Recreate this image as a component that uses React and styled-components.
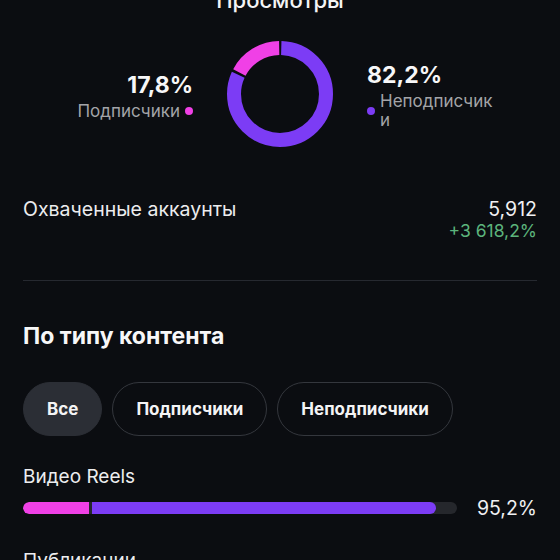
import React from "react";
import styled, { createGlobalStyle } from "styled-components";

const Global = createGlobalStyle`
  html, body { margin: 0; padding: 0; background: #0b0d11; }
  body { font-family: Inter, "Noto Sans", sans-serif; color: #f2f2f3; overflow: hidden; }
  * { box-sizing: border-box; }
`;

const Page = styled.div`
  width: 560px;
  height: 560px;
  overflow: hidden;
  background: #0b0d11;
  padding: 0 23px;
`;

const Title = styled.div`
  margin-top: -14px;
  height: 28px;
  font-size: 22px;
  line-height: 28px;
  font-weight: 500;
  text-align: center;
  color: #f4f4f5;
`;

const ChartRow = styled.div`
  margin-top: 27px;
  display: flex;
  justify-content: center;
  align-items: center;
  gap: 34px;
`;

const Side = styled.div`
  width: 150px;
  display: flex;
  flex-direction: column;
  align-items: ${(p) => (p.$right ? "flex-start" : "flex-end")};
  padding-top: 4px;
`;

const Percent = styled.div`
  font-size: 23px;
  line-height: 27px;
  font-weight: 700;
  color: #f7f7f8;
`;

const Legend = styled.div`
  display: flex;
  align-items: center;
  gap: 5px;
  margin-top: 3px;
`;

const LegendText = styled.span`
  font-size: 17px;
  line-height: 19px;
  color: #a3a4a8;
  max-width: ${(p) => (p.$narrow ? "118px" : "none")};
  word-break: break-all;
`;

const Dot = styled.span`
  flex: none;
  width: 8px;
  height: 8px;
  border-radius: 50%;
  background: ${(p) => p.$color};
`;

const StatRow = styled.div`
  margin-top: 50px;
  display: flex;
  justify-content: space-between;
  align-items: flex-start;
`;

const StatLabel = styled.div`
  font-size: 19.5px;
  line-height: 24px;
  color: #ececee;
`;

const StatValues = styled.div`
  display: flex;
  flex-direction: column;
  align-items: flex-end;
`;

const StatValue = styled.div`
  font-size: 19.5px;
  line-height: 24px;
  color: #f0f0f2;
`;

const StatDelta = styled.div`
  font-size: 17.5px;
  line-height: 20px;
  color: #5cb47c;
`;

const Divider = styled.div`
  margin-top: 39px;
  height: 1px;
  background: #262930;
`;

const SectionTitle = styled.div`
  margin-top: 41px;
  font-size: 23px;
  line-height: 28px;
  font-weight: 700;
  color: #f7f7f8;
`;

const Pills = styled.div`
  margin-top: 32px;
  display: flex;
  gap: 10px;
`;

const Pill = styled.div`
  height: 54px;
  padding: 0 23px;
  border-radius: 27px;
  display: flex;
  align-items: center;
  font-size: 17px;
  font-weight: 700;
  color: #f4f4f5;
  background: ${(p) => (p.$active ? "#2b2e35" : "transparent")};
  border: 1px solid ${(p) => (p.$active ? "#2b2e35" : "#34373d")};
`;

const BarLabel = styled.div`
  margin-top: 29px;
  font-size: 19px;
  line-height: 24px;
  color: #ededef;
`;

const BarRow = styled.div`
  margin-top: 7px;
  display: flex;
  align-items: center;
  justify-content: space-between;
`;

const Track = styled.div`
  width: 434px;
  height: 12px;
  border-radius: 6px;
  background: #25272c;
  display: flex;
  gap: 3px;
  overflow: hidden;
`;

const Seg = styled.div`
  height: 12px;
  flex: none;
  background: ${(p) => p.$color};
  border-radius: ${(p) => (p.$first ? "6px 0 0 6px" : "0 6px 6px 0")};
`;

const BarValue = styled.div`
  font-size: 19.5px;
  line-height: 24px;
  color: #f0f0f2;
`;

const PINK = "#f040e6";
const PURPLE = "#7c3cf5";

function Donut() {
  const r = 46;
  const C = 2 * Math.PI * r;
  const gap = 2.6;
  const purple = 0.822 * C;
  const pink = 0.178 * C;
  return (
    <svg width="106" height="106" viewBox="0 0 106 106">
      <g transform="rotate(-90 53 53)">
        <circle
          cx="53"
          cy="53"
          r={r}
          fill="none"
          stroke={PURPLE}
          strokeWidth="14"
          strokeDasharray={`${purple - gap} ${C}`}
          strokeDashoffset={-gap / 2}
        />
        <circle
          cx="53"
          cy="53"
          r={r}
          fill="none"
          stroke={PINK}
          strokeWidth="14"
          strokeDasharray={`${pink - gap} ${C}`}
          strokeDashoffset={-(purple + gap / 2)}
        />
      </g>
    </svg>
  );
}

export default function App() {
  const filled = 95.2;
  const pinkPart = 15.2;
  return (
    <>
      <Global />
      <Page>
        <Title>Просмотры</Title>
        <ChartRow>
          <Side>
            <Percent>17,8%</Percent>
            <Legend>
              <LegendText>Подписчики</LegendText>
              <Dot $color={PINK} />
            </Legend>
          </Side>
          <Donut />
          <Side $right>
            <Percent>82,2%</Percent>
            <Legend>
              <Dot $color={PURPLE} />
              <LegendText $narrow>Неподписчики</LegendText>
            </Legend>
          </Side>
        </ChartRow>
        <StatRow>
          <StatLabel>Охваченные аккаунты</StatLabel>
          <StatValues>
            <StatValue>5,912</StatValue>
            <StatDelta>+3 618,2%</StatDelta>
          </StatValues>
        </StatRow>
        <Divider />
        <SectionTitle>По типу контента</SectionTitle>
        <Pills>
          <Pill $active>Все</Pill>
          <Pill>Подписчики</Pill>
          <Pill>Неподписчики</Pill>
        </Pills>
        <BarLabel>Видео Reels</BarLabel>
        <BarRow>
          <Track>
            <Seg $first $color={PINK} style={{ width: `${pinkPart}%` }} />
            <Seg $color={PURPLE} style={{ width: `calc(${filled - pinkPart}% - 3px)` }} />
          </Track>
          <BarValue>95,2%</BarValue>
        </BarRow>
        <BarLabel>Публикации</BarLabel>
      </Page>
    </>
  );
}
